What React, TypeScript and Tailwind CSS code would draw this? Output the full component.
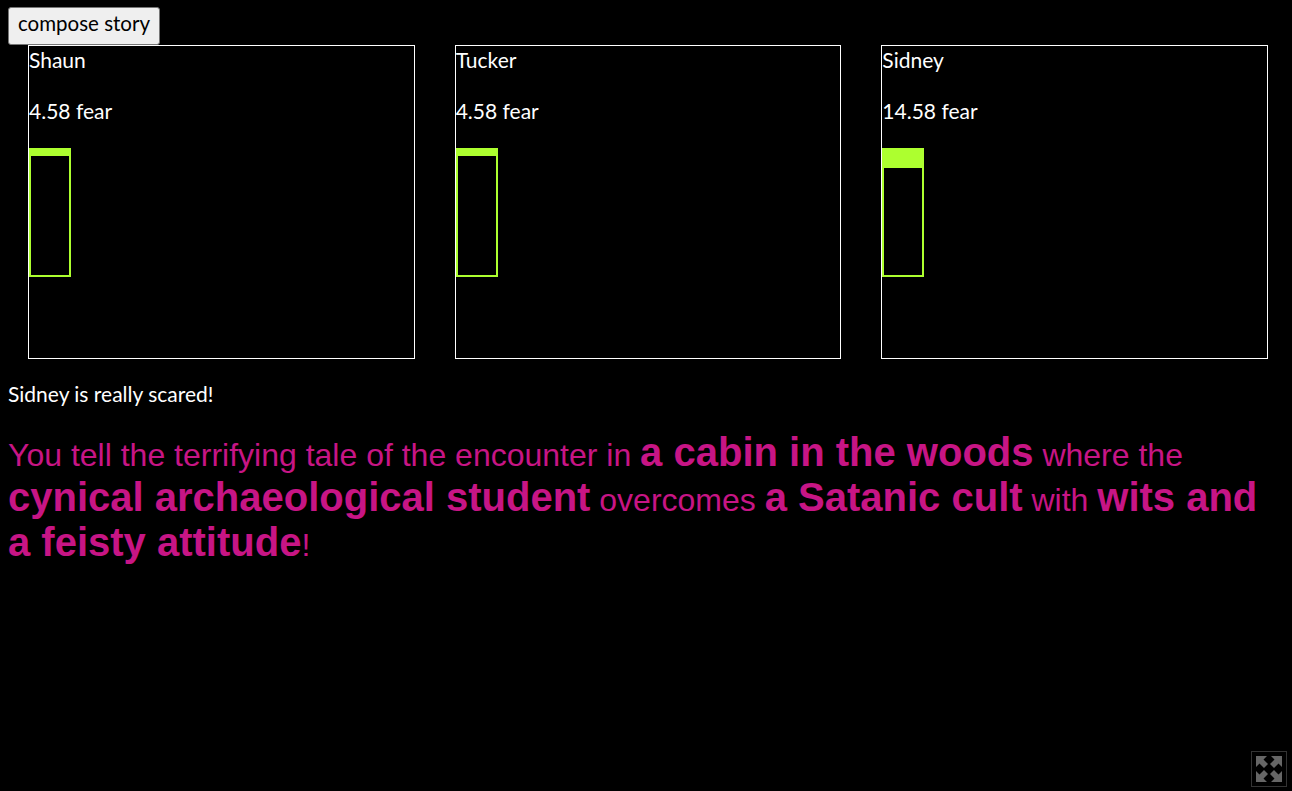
const hand = "font-['Lato','Open_Sans',sans-serif]";

const characters = [
  { name: "Shaun", fear: 4.58 },
  { name: "Tucker", fear: 4.58 },
  { name: "Sidney", fear: 14.58 },
];

function FearCard({ name, fear }: { name: string; fear: number }) {
  return (
    <div className="h-[314px] border border-white text-[21px] leading-[30px] text-white">
      <p className="-mt-[1px]">{name}</p>
      <p className="mt-[21px]">{fear} fear</p>
      <div className="mt-[22px] h-[129px] w-[42px] border-2 border-[#adff2f]">
        <div className="bg-[#adff2f]" style={{ height: Math.round(fear * 1.25) }} />
      </div>
    </div>
  );
}

function FullscreenIcon() {
  return (
    <svg viewBox="0 0 36 36" className="h-9 w-9">
      <rect x="0.5" y="0.5" width="35" height="35" fill="#000" stroke="#333" strokeWidth="1" />
      <g fill="#666">
        <path d="M5 5 H16 L12.5 8.5 L17 13 L13 17 L8.5 12.5 L5 16 Z" />
        <path d="M31 5 H20 L23.5 8.5 L19 13 L23 17 L27.5 12.5 L31 16 Z" />
        <path d="M5 31 H16 L12.5 27.5 L17 23 L13 19 L8.5 23.5 L5 20 Z" />
        <path d="M31 31 H20 L23.5 27.5 L19 23 L23 19 L27.5 23.5 L31 20 Z" />
      </g>
    </svg>
  );
}

export default function App() {
  return (
    <div className={`relative h-[791px] overflow-hidden bg-black px-2 pt-[7px] ${hand}`}>
      <button
        type="button"
        className="block h-[38px] w-[152px] whitespace-nowrap rounded-[3px] border border-[#767676] bg-[#efefef] pb-[5px] text-center text-[20.5px] leading-none text-black"
      >
        compose story
      </button>
      <div className="ml-5 mr-4 grid grid-cols-3 gap-10">
        {characters.map((c) => (
          <FearCard key={c.name} name={c.name} fear={c.fear} />
        ))}
      </div>
      <p className="mt-[20px] text-[21px] leading-[30px] text-white">Sidney is really scared!</p>
      <p className="mt-[24px] font-['Liberation_Sans',Arial,sans-serif] text-[32px] leading-[45px] text-[#c71585]">
        You tell the terrifying tale of the encounter in <b className="text-[40px] leading-[30px]">a cabin in the woods</b> where the{" "}
        <b className="text-[40px] leading-[30px]">cynical archaeological student</b> overcomes{" "}
        <b className="text-[40px] leading-[30px]">a Satanic cult</b> with{" "}
        <b className="text-[40px] leading-[30px]">wits and a feisty attitude</b>!
      </p>
      <div className="absolute bottom-1 right-[5px]">
        <FullscreenIcon />
      </div>
    </div>
  );
}
